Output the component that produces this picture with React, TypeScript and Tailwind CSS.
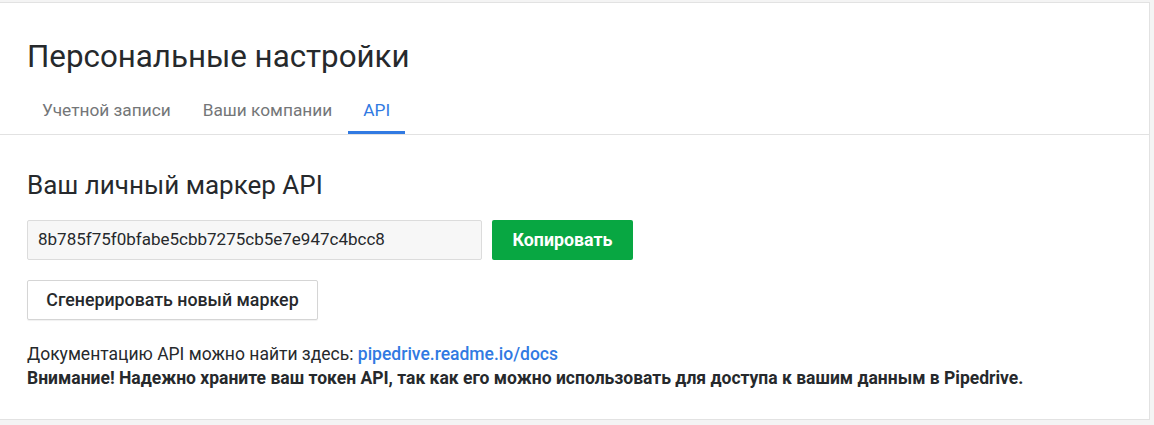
export default function App() {
  const font = { fontFamily: "Roboto, 'Noto Sans', sans-serif" };
  return (
    <div className="min-h-screen bg-[#f4f4f4] pt-[2px] pr-[4px]" style={font}>
      <div className="h-[418px] w-[1150px] border border-l-0 border-[#e2e2e2] bg-white text-[#26292c]">
        {/* header */}
        <div className="border-b border-[#e2e2e2]">
          <h1 className="pl-[27px] pt-[34px] text-[31.3px] leading-[40px] font-normal">
            Персональные настройки
          </h1>
          <nav className="mt-[17px] flex pl-[26px] text-[17.3px] leading-[24px]">
            <a className="px-4 pb-[12px] pt-[4px] text-[#747678]">Учетной записи</a>
            <a className="px-4 pb-[12px] pt-[4px] text-[#747678]">Ваши компании</a>
            <a className="border-b-[3px] border-[#317ae2] px-[15px] pb-[9px] pt-[4px] text-[#317ae2]">API</a>
          </nav>
        </div>

        {/* content */}
        <div className="px-[27px] pt-[34px]">
          <h2 className="text-[26px] leading-[32px] font-normal">Ваш личный маркер API</h2>

          <div className="mt-[19px] flex gap-[10px]">
            <div className="flex h-[40px] w-[455px] items-center rounded-[2px] border border-[#dcdcdc] bg-[#f7f7f7] px-[10px] text-[17px]">
              8b785f75f0bfabe5cbb7275cb5e7e947c4bcc8
            </div>
            <button className="h-[40px] w-[141px] rounded-[2px] bg-[#08a742] text-[17.8px] font-bold text-white">
              Копировать
            </button>
          </div>

          <button className="mt-[20px] h-[40px] w-[291px] rounded-[2px] border border-[#d5d5d5] bg-white text-[17.8px] font-medium shadow-[0_1px_1px_rgba(0,0,0,0.06)]">
            Сгенерировать новый маркер
          </button>

          <div className="mt-[22px] text-[17.5px] leading-[24px]">
            <p>
              Документацию API можно найти здесь:{" "}
              <a className="font-medium text-[#317ae2]">pipedrive.readme.io/docs</a>
            </p>
            <p className="font-bold">
              Внимание! Надежно храните ваш токен API, так как его можно использовать для доступа к вашим данным в Pipedrive.
            </p>
          </div>
        </div>
      </div>
    </div>
  );
}
